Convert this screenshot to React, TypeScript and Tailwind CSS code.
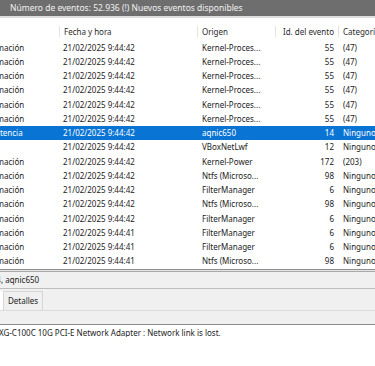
import React from 'react';

type EventRow = {
  level: string;
  date: string;
  source: string;
  id: number;
  category: string;
  selected?: boolean;
};

const rows: EventRow[] = [
  { level: 'Información', date: '21/02/2025 9:44:42', source: 'Kernel-Proces...', id: 55, category: '(47)' },
  { level: 'Información', date: '21/02/2025 9:44:42', source: 'Kernel-Proces...', id: 55, category: '(47)' },
  { level: 'Información', date: '21/02/2025 9:44:42', source: 'Kernel-Proces...', id: 55, category: '(47)' },
  { level: 'Información', date: '21/02/2025 9:44:42', source: 'Kernel-Proces...', id: 55, category: '(47)' },
  { level: 'Información', date: '21/02/2025 9:44:42', source: 'Kernel-Proces...', id: 55, category: '(47)' },
  { level: 'Información', date: '21/02/2025 9:44:42', source: 'Kernel-Proces...', id: 55, category: '(47)' },
  { level: 'Advertencia', date: '21/02/2025 9:44:42', source: 'aqnic650', id: 14, category: 'Ninguno', selected: true },
  { level: 'Error', date: '21/02/2025 9:44:42', source: 'VBoxNetLwf', id: 12, category: 'Ninguno' },
  { level: 'Información', date: '21/02/2025 9:44:42', source: 'Kernel-Power', id: 172, category: '(203)' },
  { level: 'Información', date: '21/02/2025 9:44:42', source: 'Ntfs (Microso...', id: 98, category: 'Ninguno' },
  { level: 'Información', date: '21/02/2025 9:44:42', source: 'FilterManager', id: 6, category: 'Ninguno' },
  { level: 'Información', date: '21/02/2025 9:44:42', source: 'Ntfs (Microso...', id: 98, category: 'Ninguno' },
  { level: 'Información', date: '21/02/2025 9:44:42', source: 'FilterManager', id: 6, category: 'Ninguno' },
  { level: 'Información', date: '21/02/2025 9:44:41', source: 'FilterManager', id: 6, category: 'Ninguno' },
  { level: 'Información', date: '21/02/2025 9:44:41', source: 'FilterManager', id: 6, category: 'Ninguno' },
  { level: 'Información', date: '21/02/2025 9:44:41', source: 'Ntfs (Microso...', id: 98, category: 'Ninguno' },
];

function HeaderCell({ label, className }: { label: string; className: string }) {
  return (
    <div className={`flex h-full items-center ${className}`}>
      <div className="h-[11px] w-px shrink-0 bg-[#e3e3e3]" />
      <span className="pl-[4px]">{label}</span>
    </div>
  );
}

export default function App() {
  return (
    <div
      className="h-[366px] w-[375px] overflow-hidden bg-white text-[8px] leading-none text-[#1b1b1b]"
      style={{ fontFamily: '"Noto Sans", "Open Sans", sans-serif' }}
    >
      <div className="flex h-[16px] items-center whitespace-nowrap bg-[#6e6e6e] pl-[10px] text-[8.5px] text-[#f2f2f2]">
        Número de eventos: 52.936 (!) Nuevos eventos disponibles
      </div>
      <div className="h-[2px] bg-[#dedede]" />

      <div className="flex h-[22.5px] whitespace-nowrap pt-[5px] text-[#2b2b2b]">
        <div className="w-[59px] shrink-0" />
        <HeaderCell label="Fecha y hora" className="w-[138px] shrink-0" />
        <HeaderCell label="Origen" className="w-[78px] shrink-0" />
        <div className="flex h-full w-[63px] shrink-0 items-center">
          <div className="h-[11px] w-px shrink-0 bg-[#e3e3e3]" />
          <span className="ml-auto pr-[4px]">Id. del evento</span>
        </div>
        <HeaderCell label="Categoría de la tarea" className="flex-1" />
      </div>

      <div className="flex flex-col">
        {rows.map((row, index) => (
          <div
            key={index}
            className={`flex h-[14.25px] items-center whitespace-nowrap ${
              row.selected ? 'bg-[#0a74d4] text-white' : ''
            }`}
          >
            <div className="w-[59px] shrink-0 overflow-hidden">
              <span className="-ml-[22px] block">{row.level}</span>
            </div>
            <div className="w-[138px] shrink-0 pl-[4px]">{row.date}</div>
            <div className="w-[78px] shrink-0 pl-[5px]">{row.source}</div>
            <div className="w-[63px] shrink-0 pr-[4px] text-right">{row.id}</div>
            <div className="flex-1 pl-[5px]">{row.category}</div>
          </div>
        ))}
      </div>

      <div className="h-px bg-[#8f8f8f]" />
      <div className="h-px bg-[#e4e4e4]" />
      <div className="h-px bg-[#a9a9a9]" />
      <div className="flex h-[16px] items-center overflow-hidden whitespace-nowrap bg-[#f0f0f0]">
        <span className="-ml-[36px]">Evento 14, aqnic650</span>
      </div>
      <div className="h-px bg-[#bdbdbd]" />
      <div className="flex h-[21px] items-end bg-[#f0f0f0]">
        <div className="h-[19px] w-[4px] border-r border-[#d6d6d6] bg-white" />
        <div className="flex h-[19px] items-center border-r border-t border-[#d6d6d6] px-[4px]">Detalles</div>
      </div>
      <div className="h-px bg-[#dadada]" />
      <div className="h-[13px] bg-[#f0f0f0]" />
      <div className="h-px bg-[#8a8a8a]" />
      <div className="overflow-hidden whitespace-nowrap pt-[4px]">
        <span className="-ml-[65px] block">Aquantia AQtion XG-C100C 10G PCI-E Network Adapter : Network link is lost.</span>
      </div>
    </div>
  );
}
